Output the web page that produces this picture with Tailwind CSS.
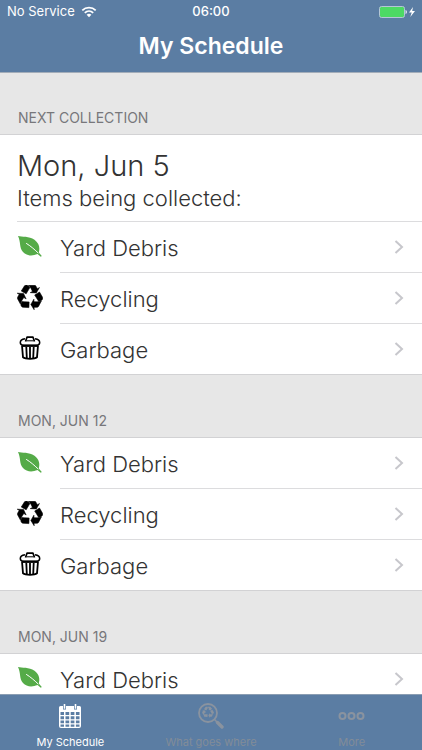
<!DOCTYPE html>
<html lang="en">
<head>
<meta charset="utf-8">
<meta name="viewport" content="width=device-width, initial-scale=1">
<title>My Schedule</title>
<script src="https://cdn.jsdelivr.net/npm/@tailwindcss/browser@4"></script>
</head>
<body class="flex h-screen flex-col overflow-hidden bg-[#e7e7e7] font-['Inter','Liberation_Sans',sans-serif] text-[#333]">

<!-- Shared icons -->
<svg class="hidden" aria-hidden="true">
  <symbol id="leaf" viewBox="0 0 26 24">
    <path fill="#55ab48" d="M1 1C5 2.200 12 .8 17.500 4.800C22.500 8.800 23 13 21.800 17.500L24.800 21L23.800 21.800L20.500 19C15 21.500 9.500 20.800 6 17C2 12.500 4 7 1 1Z"/>
    <path fill="none" stroke="#fff" stroke-width="1" stroke-linecap="round" d="M9.500 8.500C13.500 11 17 14 21 17.800"/>
  </symbol>
  <symbol id="recycle" viewBox="0 0 1792 1792">
    <path d="M836 1169l-15 368-2 22-420-29q-36-3-67-31.500t-47-65.500q-11-27-14.500-55t4-65 12-55 21.500-64 19-53q78 12 509 28zm-387-586l180 379-147-92q-63 72-111.500 144.500t-72.500 125-39.500 94.500-18.500 63l-4 21-190-357q-17-26-18-56t6-47l8-18q35-63 114-188l-140-86zm1231 517l-188 359q-12 29-36.500 46.500t-43.500 20.500l-18 4q-71 7-219 12l8 164-230-367 211-362 7 173q170 16 283 5t170-33zm-785-924q-47 63-265 435l-317-187-19-12 225-356q20-31 60-45t80-10q24 2 48.500 12t42 21 41.500 33 36 34.500 36 39.500 32 35zm655 307l212 363q18 37 12.500 76t-27.500 74q-13 20-33 37t-38 28-48.500 22-47 16-51.500 14-46 12q-34-72-265-436l313-195zm-143-226l142-83-220 373-419-20 151-86q-34-89-75-166t-75.500-123.500-64.500-80-47-46.500l-17-13 405 1q31-3 58 10.500t39 28.500l11 15q39 61 112 190z"/>
  </symbol>
  <symbol id="bin" viewBox="0 0 26 26">
    <g fill="none" stroke="#000" stroke-linejoin="round">
      <path stroke-width="1.700" d="M8.500 6.500L10 2.200H16L17.500 6.500"/>
      <path stroke-width="1.500" d="M8 3.800C4.500 4.400 3.300 5.700 3.300 7.500C3.300 9.200 5 10.200 6.500 10.400H19.500C21 10.200 22.700 9.200 22.700 7.500C22.700 5.700 21.500 4.400 18 3.800"/>
      <path stroke-width="1" d="M9.500 5.800H16.500"/>
      <path stroke-width="1.800" d="M5 10.500L6 22.300C8.500 24.300 17.500 24.300 20 22.300L21 10.500"/>
      <path stroke-width="1.800" d="M9.300 12L9.800 23M16.700 12L16.200 23M13 12V23.500"/>
      <path stroke-width="2.400" d="M5.500 10.700H20.500"/>
    </g>
  </symbol>
  <symbol id="chevron" viewBox="0 0 10 16">
    <path fill="none" stroke="#c7c7cc" stroke-width="2" d="M1.500 2L8 8L1.500 14"/>
  </symbol>
</svg>

<header class="shrink-0 border-b border-[#a3adb9] bg-[#5b7da3] text-white">
  <div class="grid h-6 grid-cols-3 items-center px-[7px] text-[13px]">
    <div class="flex items-center gap-[6px]">
      <span>No Service</span>
      <svg class="h-3 w-4" viewBox="0 0 16 12" aria-label="Wi-Fi" role="img">
        <g fill="none" stroke="#fff" stroke-width="1.800">
          <path d="M1.300 4.300C5 .7 11 .7 14.700 4.300"/>
          <path d="M3.800 6.800C6.200 4.600 9.800 4.600 12.200 6.800"/>
        </g>
        <path fill="#fff" d="M5.600 8.700C7 7.500 9 7.500 10.400 8.700L8 11.200Z"/>
      </svg>
    </div>
    <time class="text-center font-medium">06:00</time>
    <div class="flex items-center justify-end">
      <svg class="h-3 w-9" viewBox="2 0 36 12" aria-label="Battery charging" role="img">
        <rect x="2.500" y=".5" width="25" height="11" rx="2" fill="#4cd964" stroke="#b5c6d6"/>
        <path fill="#fff" d="M28.600 4C30.200 4.300 30.200 7.700 28.600 8ZM36 1L32 6.500H34.700L33.300 11L38 5H35.200Z"/>
      </svg>
    </div>
  </div>
  <h1 class="h-12 pt-1 text-center text-[23px] leading-9 font-semibold">My Schedule</h1>
</header>

<main class="min-h-0 flex-1 overflow-y-auto [scrollbar-width:none]">
  <section>
    <h2 class="flex h-[61px] items-end px-[18px] pb-[6px] text-[14px] leading-5 text-[#77777b]">NEXT COLLECTION</h2>
    <div class="border-y border-[#d2d2d4] bg-white">
      <div class="ml-[17px] border-b border-[#dcdcde] pt-[14px] pb-2 font-light">
        <p class="text-[29px] leading-[34px]">Mon, Jun 5</p>
        <p class="text-[22px] leading-[30px]">Items being collected:</p>
      </div>
      <ul>
        <li><a href="#yard" class="flex items-center pl-[17px]">
          <svg class="mb-[2px] h-6 w-[26px]"><use href="#leaf"/></svg>
          <span class="ml-[17px] flex h-[51px] flex-1 items-center justify-between border-b border-[#dcdcde] pr-[18px] text-[22px] font-light"><span class="pt-[2px]">Yard Debris</span><svg class="h-4 w-[10px]"><use href="#chevron"/></svg></span></a></li>
        <li><a href="#recycling" class="flex items-center pl-[17px]">
          <svg class="mb-[2px] h-[26px] w-[26px] stroke-black stroke-[40px]"><use href="#recycle"/></svg>
          <span class="ml-[17px] flex h-[51px] flex-1 items-center justify-between border-b border-[#dcdcde] pr-[18px] text-[22px] font-light"><span class="pt-[2px]">Recycling</span><svg class="h-4 w-[10px]"><use href="#chevron"/></svg></span></a></li>
        <li><a href="#garbage" class="flex items-center pl-[17px]">
          <svg class="mb-[2px] h-[26px] w-[26px]"><use href="#bin"/></svg>
          <span class="ml-[17px] flex h-[50px] flex-1 items-center justify-between pr-[18px] text-[22px] font-light"><span class="pt-[2px]">Garbage</span><svg class="h-4 w-[10px]"><use href="#chevron"/></svg></span></a></li>
      </ul>
    </div>
  </section>

  <section>
    <h2 class="flex h-[62px] items-end px-[18px] pb-[6px] text-[14px] leading-5 text-[#77777b]">MON, JUN 12</h2>
    <ul class="border-y border-[#d2d2d4] bg-white">
      <li><a href="#yard" class="flex items-center pl-[17px]">
        <svg class="mb-[2px] h-6 w-[26px]"><use href="#leaf"/></svg>
        <span class="ml-[17px] flex h-[51px] flex-1 items-center justify-between border-b border-[#dcdcde] pr-[18px] text-[22px] font-light"><span class="pt-[2px]">Yard Debris</span><svg class="h-4 w-[10px]"><use href="#chevron"/></svg></span></a></li>
      <li><a href="#recycling" class="flex items-center pl-[17px]">
        <svg class="mb-[2px] h-[26px] w-[26px] stroke-black stroke-[40px]"><use href="#recycle"/></svg>
        <span class="ml-[17px] flex h-[51px] flex-1 items-center justify-between border-b border-[#dcdcde] pr-[18px] text-[22px] font-light"><span class="pt-[2px]">Recycling</span><svg class="h-4 w-[10px]"><use href="#chevron"/></svg></span></a></li>
      <li><a href="#garbage" class="flex items-center pl-[17px]">
        <svg class="mb-[2px] h-[26px] w-[26px]"><use href="#bin"/></svg>
        <span class="ml-[17px] flex h-[50px] flex-1 items-center justify-between pr-[18px] text-[22px] font-light"><span class="pt-[2px]">Garbage</span><svg class="h-4 w-[10px]"><use href="#chevron"/></svg></span></a></li>
    </ul>
  </section>

  <section>
    <h2 class="flex h-[62px] items-end px-[18px] pb-[6px] text-[14px] leading-5 text-[#77777b]">MON, JUN 19</h2>
    <ul class="border-y border-[#d2d2d4] bg-white">
      <li><a href="#yard" class="flex items-center pl-[17px]">
        <svg class="mb-[2px] h-6 w-[26px]"><use href="#leaf"/></svg>
        <span class="ml-[17px] flex h-[50px] flex-1 items-center justify-between pr-[18px] text-[22px] font-light"><span class="pt-[2px]">Yard Debris</span><svg class="h-4 w-[10px]"><use href="#chevron"/></svg></span></a></li>
    </ul>
  </section>
</main>

<nav class="grid h-14 shrink-0 grid-cols-3 border-t border-[#8b9eb3] bg-[#5b7da3] text-[11px] leading-4 text-[#828c98]">
  <a href="#schedule" aria-current="page" class="flex flex-col items-center justify-between pt-2 text-white">
    <svg class="h-[26px] w-[22px]" viewBox="0 0 22 26" aria-hidden="true">
      <path fill="#fff" d="M0 4.500Q0 3 1.500 3H4V6.500H7V3H15V6.500H18V3H20.500Q22 3 22 4.500V23Q22 25 20 25H2Q0 25 0 23ZM4.700 1H6.300V5.800H4.700ZM15.700 1H17.300V5.800H15.700Z"/>
      <g fill="#5b7da3">
        <path d="M1.500 9H5V12H1.500ZM6.500 9H10.200V12H6.500ZM11.700 9H15.400V12H11.700ZM16.900 9H20.500V12H16.900Z"/>
        <path d="M1.500 13.300H5V16.300H1.500ZM6.500 13.300H10.200V16.300H6.500ZM11.700 13.300H15.400V16.300H11.700ZM16.900 13.300H20.500V16.300H16.900Z"/>
        <path d="M1.500 17.600H5V20.300H1.500ZM6.500 17.600H10.200V20.300H6.500ZM11.700 17.600H15.400V20.300H11.700ZM16.900 17.600H20.500V20.300H16.900Z"/>
        <path d="M1.500 21.500H5V23.700H1.500ZM6.500 21.500H10.200V23.700H6.500ZM11.700 21.500H15.400V23.700H11.700ZM16.900 21.500H20.500V23.700H16.900Z"/>
      </g>
    </svg>
    <span>My Schedule</span>
  </a>
  <a href="#where" class="flex flex-col items-center justify-between pt-2">
    <svg class="h-[26px] w-[26px]" viewBox="0 0 26 26" aria-hidden="true">
      <circle cx="10" cy="10" r="9" fill="none" stroke="#8a939f" stroke-width="1.800"/>
      <path stroke="#8a939f" stroke-width="3.400" stroke-linecap="round" d="M19.500 19.500L24 24"/>
      <path stroke="#8a939f" stroke-width="1.500" d="M16.500 16.500L19 19"/>
      <use href="#recycle" x="4" y="3.500" width="12" height="12" fill="#8a939f"/>
    </svg>
    <span>What goes where</span>
  </a>
  <a href="#more" class="flex flex-col items-center justify-between pt-2">
    <svg class="h-[26px] w-[27px]" viewBox="0 0 27 26" aria-hidden="true">
      <g fill="none" stroke="#8a939f" stroke-width="2">
        <circle cx="4.500" cy="13" r="3"/><circle cx="13.500" cy="13" r="3"/><circle cx="22.500" cy="13" r="3"/>
      </g>
    </svg>
    <span>More</span>
  </a>
</nav>
</body>
</html>
